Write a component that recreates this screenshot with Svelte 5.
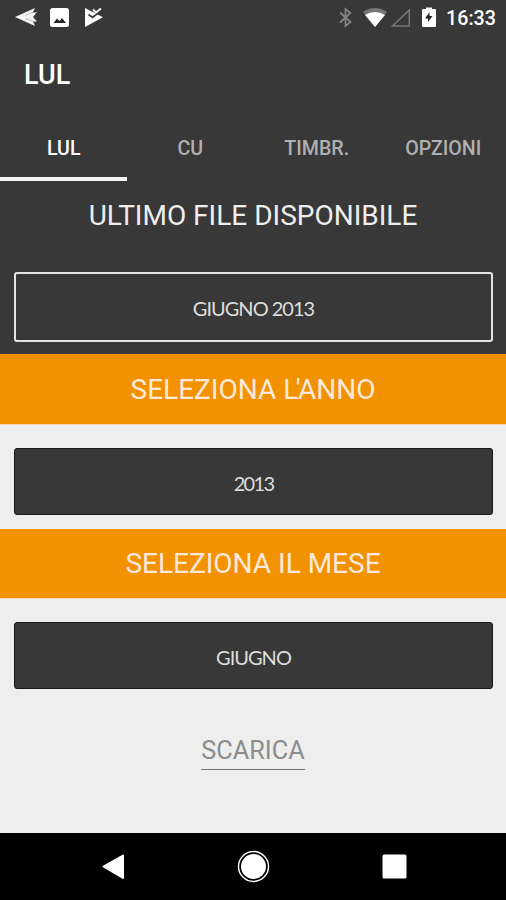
<script>
  const tabs = ['LUL', 'CU', 'TIMBR.', 'OPZIONI'];
  let activeTab = 'LUL';

  let year = '2013';
  let month = 'GIUGNO';
  const lastFile = 'GIUGNO 2013';
</script>

<div class="screen">
  <div class="status">
    <svg class="notifications" width="110" height="36" viewBox="0 0 110 36">
      <path d="M15 17 L35 8 L32.5 13 L37 12 L33 17 L37 21.5 L33 21.5 L35 26 Z" fill="#f4f4f4" />
      <path d="M25 15.5 L34 12 M25 18.5 L35 22" stroke="#aaa" stroke-width="0.7" />
      <rect x="50" y="8" width="19" height="19" rx="2.5" fill="#fff" />
      <path d="M53.5 23 L57 18.5 L59.5 21 L62 18 L66 23 Z" fill="#252525" />
      <path d="M85 8 L103 17.2 L85 27 Z" fill="#fff" />
      <path d="M88.5 14.5 L92.5 17.5 L101 11" fill="none" stroke="#383838" stroke-width="1.6" />
      <path d="M93 9.5 L96 12.5 L101 8.5" fill="none" stroke="#fff" stroke-width="2" />
    </svg>
    <svg class="system" width="112" height="36" viewBox="335 0 112 36">
      <path d="M340 12.5 L350.5 22 L345.5 26 V9 L350.5 13 L340 22.5" fill="none" stroke="#858585" stroke-width="1.7" />
      <path d="M363 12 Q375 4 387 12 L375 27 Z" fill="#777" />
      <path d="M365 15 Q375 9 385 15 L375 27 Z" fill="#fff" />
      <path d="M392.5 26 L409.3 10 V26 Z" fill="none" stroke="#777" stroke-width="1.5" />
      <path d="M423 9 H426 V7.5 H432 V9 H435 Q436 9 436 10 V26 Q436 27 435 27 H423 Q422 27 422 26 V10 Q422 9 423 9 Z" fill="#fff" />
      <path d="M429.5 12 L425 18.5 H428 V22 L432.5 16 H429.5 Z" fill="#252525" />
    </svg>
    <span class="clock">16:33</span>
  </div>

  <h1>LUL</h1>

  <nav class="tabs">
    {#each tabs as tab}
      <button class="tab" class:active={activeTab === tab} on:click={() => (activeTab = tab)}>{tab}</button>
    {/each}
  </nav>

  <section class="latest">
    <h2>ULTIMO FILE DISPONIBILE</h2>
    <button class="field outlined">{lastFile}</button>
  </section>

  <h2 class="band">SELEZIONA <span class="kern">L'</span>ANNO</h2>
  <div class="picker">
    <button class="field year">{year}</button>
  </div>

  <h2 class="band month">SELEZIONA IL MESE</h2>
  <div class="picker">
    <button class="field">{month}</button>
  </div>

  <div class="actions">
    <button class="download">SCARICA</button>
  </div>

  <div class="navbar">
    <svg width="506" height="67" viewBox="0 0 506 67">
      <path d="M103.5 33.5 L123 22.5 V45 Z" fill="#fff" stroke="#fff" stroke-width="2" stroke-linejoin="round" />
      <circle cx="253.5" cy="33.5" r="12.5" fill="#fff" />
      <circle cx="253.5" cy="33.5" r="15" fill="none" stroke="#fff" stroke-width="1.4" />
      <rect x="382.5" y="21.5" width="24" height="24" rx="1.5" fill="#fff" />
    </svg>
  </div>
</div>

<style>
  :global(body) {
    background: #eee;
  }

  .screen {
    display: flex;
    flex-direction: column;
    width: 506px;
    height: 900px;
    background: #eee;
    font-family: Roboto, sans-serif;
  }

  button {
    font: inherit;
    border: none;
    padding: 0;
    background: none;
    cursor: pointer;
  }

  .status {
    display: flex;
    align-items: center;
    height: 36px;
    background: #383838;
    color: #fff;
  }

  .system {
    margin-left: auto;
    margin-right: -1px;
  }

  .clock {
    width: 60px;
    font-size: 19.7px;
    font-weight: 500;
  }

  h1 {
    margin: 0;
    padding-left: 24px;
    height: 78px;
    line-height: 78px;
    background: #383838;
    color: #fff;
    font-size: 27px;
    font-weight: 500;
  }

  .tabs {
    display: grid;
    grid-template-columns: repeat(4, 1fr);
    height: 67px;
    background: #383838;
  }

  .tab {
    padding: 6px 0 0 1px;
    border-bottom: 4px solid transparent;
    color: #b0b0b0;
    font-size: 19.6px;
    font-weight: 500;
  }

  .tab.active {
    color: #fff;
    border-color: #f4f4f4;
  }

  h2 {
    margin: 0;
    height: 70px;
    line-height: 69px;
    text-align: center;
    color: #eee;
    font-size: 28px;
    font-weight: 400;
  }

  .latest {
    height: 173px;
    background: #383838;
  }

  .latest .field {
    margin: 21px 13px 0 14px;
  }

  .band {
    height: 71px;
    line-height: 71px;
    box-sizing: border-box;
    background: #f39200;
    color: #fce9dc;
    border-bottom: 1px solid #f8d9bd;
  }

  .band.month {
    height: 70px;
    line-height: 69px;
  }

  .kern {
    letter-spacing: -2.6px;
  }

  .picker {
    height: 104px;
    padding: 23px 13px 0 14px;
    box-sizing: border-box;
  }

  .field {
    display: block;
    width: 479px;
    height: 67px;
    border: 1px solid #181818;
    border-radius: 3px;
    background: #383838;
    color: #ddd;
    font-family: Lato, sans-serif;
    font-size: 20px;
    line-height: 26px;
    letter-spacing: -1px;
    padding-top: 2px;
  }

  .field.outlined {
    height: 70px;
    border: 2px solid #e4e4e4;
  }

  .field.year {
    letter-spacing: -1.7px;
  }

  .actions {
    flex: 1;
    display: flex;
    justify-content: center;
    align-items: flex-start;
    padding-top: 28px;
  }

  .download {
    height: 39px;
    color: #8c8c8c;
    font-size: 25.3px;
    border-bottom: 1px solid #757575;
  }

  .navbar {
    height: 67px;
    background: #000;
  }

  .navbar svg {
    display: block;
  }
</style>
